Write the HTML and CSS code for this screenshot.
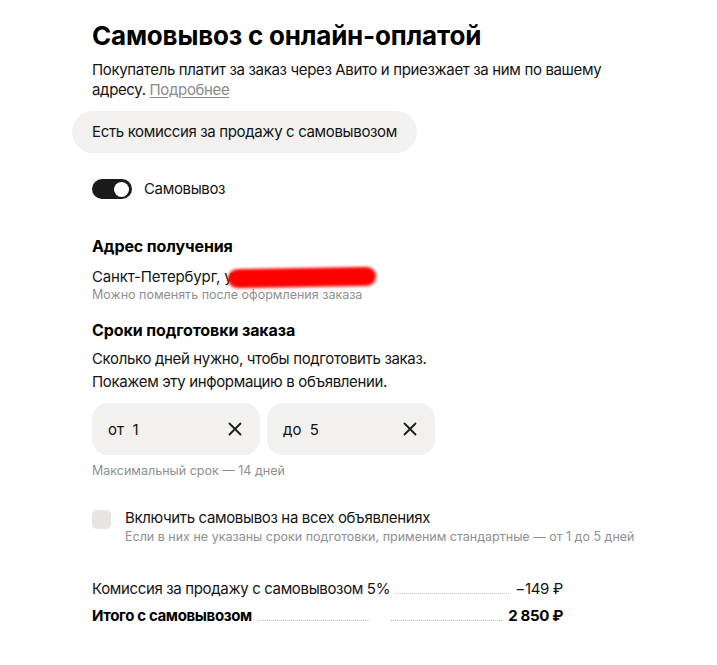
FILE: index.html
```html
<!DOCTYPE html>
<html lang="ru">
<head>
<meta charset="utf-8">
<link rel="stylesheet" href="styles.css">
</head>
<body>
<main class="page">
  <h1 class="title">Самовывоз с онлайн-оплатой</h1>
  <p class="lead">Покупатель платит за заказ через Авито и приезжает за ним по вашему адресу. <a class="more" href="#">Подробнее</a></p>
  <div class="pill">Есть комиссия за продажу с самовывозом</div>

  <label class="toggle-row">
    <span class="toggle"><span class="knob"></span></span>
    <span class="toggle-label">Самовывоз</span>
  </label>

  <section class="block addr">
    <h2 class="h2">Адрес получения</h2>
    <div class="addr-line">Санкт-Петербург, у<span class="redact"></span></div>
    <div class="hint">Можно поменять после оформления заказа</div>
  </section>

  <section class="block terms">
    <h2 class="h2">Сроки подготовки заказа</h2>
    <p class="terms-text">Сколько дней нужно, чтобы подготовить заказ.<br>Покажем эту информацию в объявлении.</p>
    <div class="inputs">
      <div class="field"><span class="field-val">от&nbsp; 1</span>
        <svg class="clear" width="14" height="14" viewBox="0 0 14 14"><path d="M1.5 1.5L12.5 12.5M12.5 1.5L1.5 12.5" stroke="#1a1a1a" stroke-width="1.8" stroke-linecap="round"/></svg>
      </div>
      <div class="field"><span class="field-val">до&nbsp; 5</span>
        <svg class="clear" width="14" height="14" viewBox="0 0 14 14"><path d="M1.5 1.5L12.5 12.5M12.5 1.5L1.5 12.5" stroke="#1a1a1a" stroke-width="1.8" stroke-linecap="round"/></svg>
      </div>
    </div>
    <div class="hint max">Максимальный срок — 14 дней</div>
  </section>

  <div class="check-row">
    <span class="checkbox"></span>
    <div class="check-text">
      <div class="check-label">Включить самовывоз на всех объявлениях</div>
      <div class="hint">Если в них не указаны сроки подготовки, применим стандартные — от 1 до 5 дней</div>
    </div>
  </div>

  <div class="summary">
    <div class="sum-row">
      <span class="sum-name">Комиссия за продажу с самовывозом 5%</span>
      <span class="dots"></span>
      <span class="sum-val">−149 ₽</span>
    </div>
    <div class="sum-row total">
      <span class="sum-name">Итого с самовывозом</span>
      <span class="dots"></span>
      <span class="dots-gap"></span>
      <span class="dots"></span>
      <span class="sum-val">2 850 ₽</span>
    </div>
  </div>
</main>
</body>
</html>
```

FILE: styles.css
```css
* { box-sizing: border-box; }
html, body { margin: 0; padding: 0; background: #fff; }
body {
  font-family: Inter, "Noto Sans", "Liberation Sans", sans-serif;
  color: #141414;
  -webkit-font-smoothing: antialiased;
}
.page {
  padding: 19px 0 0 92px;
  width: 717px;
}
.title {
  margin: 0;
  font-size: 26px;
  line-height: 34px;
  font-weight: 700;
  letter-spacing: -0.2px;
  color: #000;
}
.lead {
  margin: 7px 0 0;
  font-size: 15px;
  line-height: 19.5px;
  width: 540px;
  letter-spacing: -0.35px;
}
.more {
  color: #8a8a8a;
  text-decoration: underline;
  text-decoration-thickness: 1px;
  text-underline-offset: 2px;
}
.pill {
  display: inline-block;
  margin: 12px 0 0 -20px;
  padding: 11px 20px;
  background: #f2f1ef;
  border-radius: 21px;
  font-size: 15px;
  line-height: 20px;
  letter-spacing: -0.35px;
}
.toggle-row {
  display: flex;
  align-items: center;
  gap: 12px;
  margin-top: 26px;
}
.toggle {
  width: 40px;
  height: 20px;
  border-radius: 10px;
  background: #1a1a1a;
  display: flex;
  justify-content: flex-end;
  align-items: center;
  padding: 0 3px;
}
.knob {
  width: 15px;
  height: 15px;
  border-radius: 50%;
  background: #fff;
}
.toggle-label { font-size: 15px; line-height: 20px; letter-spacing: -0.35px; }
.block { margin: 0; }
.addr { margin-top: 36px; }
.h2 {
  margin: 0;
  font-size: 16px;
  line-height: 22px;
  font-weight: 700;
  color: #000;
  letter-spacing: -0.1px;
}
.addr-line {
  margin-top: 10px;
  font-size: 15px;
  line-height: 20px;
  letter-spacing: -0.15px;
  display: flex;
  align-items: center;
}
.redact {
  display: inline-block;
  width: 148px;
  height: 19px;
  margin-left: -5px;
  background: #ff0000;
  border-radius: 10px;
  filter: blur(1.5px);
  transform: rotate(-1deg);
}
.hint {
  font-size: 12.5px;
  line-height: 17px;
  color: #8f8f8f;
}
.addr .hint { margin-top: -1px; }
.terms { margin-top: 16px; }
.terms-text {
  margin: 6px 0 0;
  font-size: 15px;
  line-height: 23px;
  letter-spacing: -0.35px;
}
.inputs {
  display: flex;
  gap: 7px;
  margin-top: 10px;
}
.field {
  width: 168px;
  height: 52px;
  border-radius: 16px;
  background: #f2f1ef;
  display: flex;
  align-items: center;
  justify-content: space-between;
  padding: 0 18px 0 16px;
  font-size: 15px;
}
.clear { display: block; }
.max { margin-top: 7px; }
.check-row {
  display: flex;
  gap: 14px;
  margin-top: 30px;
}
.checkbox {
  width: 19px;
  height: 19px;
  border-radius: 5px;
  background: #e6e5e3;
  margin-top: 1px;
  flex: none;
}
.check-label { font-size: 15px; line-height: 18px; letter-spacing: -0.35px; }
.check-text .hint { margin-top: 1px; }
.summary {
  width: 471px;
  margin-top: 34px;
}
.sum-row {
  display: flex;
  align-items: baseline;
  font-size: 15px;
  line-height: 20px;
  letter-spacing: -0.35px;
}
.sum-row + .sum-row { margin-top: 7px; }
.dots {
  flex: 1;
  border-bottom: 1px dotted #c4c4c4;
  margin: 0 6px;
}
.dots-gap { width: 8px; }
.sum-row.total { font-weight: 700; color: #000; }
```
